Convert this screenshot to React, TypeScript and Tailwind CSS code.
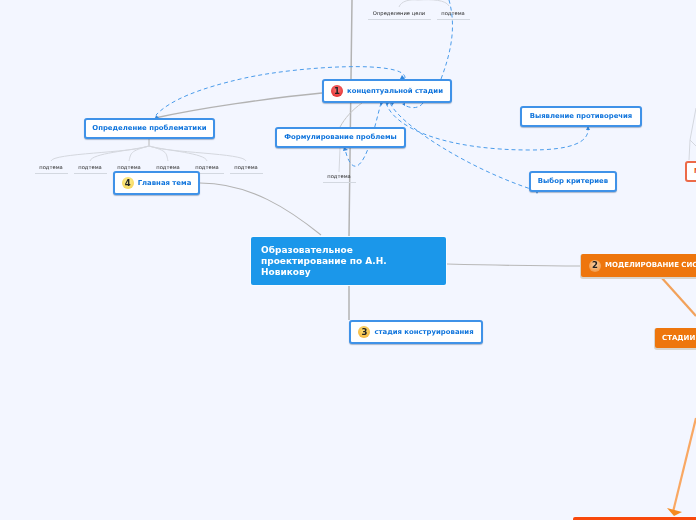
const dejavu = "font-['DejaVu_Sans',sans-serif]";

function Badge({ n, from, to, color = "text-[#222]" }: { n: string; from: string; to: string; color?: string }) {
  return (
    <span
      className={`w-[12px] h-[12px] shrink-0 rounded-full flex items-center justify-center text-[8.5px] font-bold ${color}`}
      style={{ background: `radial-gradient(circle at 50% 40%, ${from}, ${to})` }}
    >
      {n}
    </span>
  );
}

function Node({ x, y, w, h, children }: { x: number; y: number; w: number; h: number; children: React.ReactNode }) {
  return (
    <div
      className="absolute flex items-center justify-center gap-[4px] bg-white border-2 border-[#3f92e8] rounded-[3px] shadow-[0_1px_1px_rgba(60,90,130,0.4)] text-[#0f74dc] text-[6.9px] font-bold whitespace-nowrap"
      style={{ left: x, top: y, width: w, height: h }}
    >
      {children}
    </div>
  );
}

function Sub({ cx, y, w = 33, text = "подтема" }: { cx: number; y: number; w?: number; text?: string }) {
  return (
    <div
      className="absolute h-[13px] border-b border-[#d3d8e0] text-[#222] text-[5.2px] leading-[12px] text-center whitespace-nowrap"
      style={{ left: cx - w / 2, top: y, width: w }}
    >
      {text}
    </div>
  );
}

function Orange({ x, y, w, h, children }: { x: number; y: number; w: number; h: number; children: React.ReactNode }) {
  return (
    <div
      className="absolute flex items-center bg-[#ee760d] rounded-[2px] shadow-[0_1px_0_1px_#d8d4cc] text-white text-[7px] font-bold whitespace-nowrap overflow-hidden"
      style={{ left: x, top: y, width: w, height: h }}
    >
      {children}
    </div>
  );
}

const subs = [51, 90, 129, 168, 207, 246];

export default function App() {
  return (
    <div className="w-[696px] h-[520px] overflow-hidden bg-[#f3f6ff]">
      <div className={`relative w-[696px] h-[520px] blur-[0.25px] ${dejavu}`}>
        <svg className="absolute inset-0" width={696} height={520} viewBox="0 0 696 520" fill="none">
          {/* grey main branches */}
          <path d="M352 0 C351 60 350 150 349 237" stroke="#b3b3b3" strokeWidth={1.5} />
          <path d="M349 285 L349 320" stroke="#b3b3b3" strokeWidth={1.5} />
          <path d="M322 93 C270 98 200 108 155 118" stroke="#b3b3b3" strokeWidth={1.3} />
          <path d="M200 183 C250 183 290 210 321 235" stroke="#b3b3b3" strokeWidth={1.1} />
          <path d="M447 264 C490 265 540 266 581 266" stroke="#b8b8b8" strokeWidth={1.2} />
          <path d="M362 103 C352 110 345 118 340 127" stroke="#c4c4c4" strokeWidth={1} />
          {/* sub-topic fans */}
          <path d="M149 139 L149 146" stroke="#b8b8b8" strokeWidth={1} />
          {subs.map((cx) => (
            <path
              key={cx}
              d={cx < 149 ? `M149 146 C130 ${cx < 60 ? 153 : 151} ${cx + 2} 153 ${cx} 161` : `M149 146 C168 ${cx > 240 ? 153 : 151} ${cx - 2} 153 ${cx} 161`}
              stroke="#d4d7de"
              strokeWidth={1}
            />
          ))}
          <path d="M340 148 L339 172" stroke="#d4d7de" strokeWidth={1} />
          <path d="M399 7 C401 1 410 -1 418 0 C432 -1 446 0 449 6" stroke="#d4d7de" strokeWidth={1} />
          <path d="M689 160 L690 140 L696 108" stroke="#d4d7de" strokeWidth={1} />
          <path d="M690 140 L696 146" stroke="#d4d7de" strokeWidth={1} />
          {/* dashed relations */}
          <g stroke="#4a9bea" strokeWidth={1} strokeDasharray="4 3">
            <path d="M405 78 C406 60 300 66 245 78 C200 88 170 100 156 115" />
            <path d="M441 79 C452 50 456 25 449 0" />
            <path d="M423 103 C418 110 408 108 403 104" />
            <path d="M381 103 C375 125 368 160 357 166 C351 168 347 158 345 149" />
            <path d="M386 103 C395 130 450 150 530 150 C570 150 590 143 588 127" />
            <path d="M390 103 C400 125 470 170 537 191" />
          </g>
          <g fill="#2f86de">
            <path d="M402 75 L405 79 L400 79 Z" />
            <path d="M156 115 L159 118 L155 119 Z" />
            <path d="M402 104 L405 103 L405 106 Z" />
            <path d="M380 103 L383 103 L381 106 Z M386 103 L389 103 L387 106 Z M391 103 L394 103 L392 106 Z" />
            <path d="M344 147 L348 150 L343 151 Z" />
            <path d="M588 126 L590 130 L586 130 Z" />
            <path d="M537 194 L539 190 L535 190 Z" />
          </g>
          {/* orange branches */}
          <path d="M661 277 L696 316" stroke="#f2a25b" strokeWidth={2.2} />
          <path d="M696 418 L673 512" stroke="#f9a863" strokeWidth={2.2} />
          <path d="M667 508 L682 512 L674 516 Z" fill="#f58a1f" />
        </svg>

        <Sub cx={399} y={7} w={63} text="Определение цели" />
        <Sub cx={453} y={7} />
        {subs.map((cx) => (
          <Sub key={cx} cx={cx} y={161} />
        ))}
        <Sub cx={339} y={170} />

        <Node x={322} y={79} w={130} h={24}>
          <Badge n="1" from="#f77" to="#d91f1f" />
          <span>концептуальной стадии</span>
        </Node>
        <Node x={84} y={118} w={131} h={21}>Определение проблематики</Node>
        <Node x={113} y={171} w={87} h={24}>
          <Badge n="4" from="#fff59a" to="#f3cb45" />
          <span>Главная тема</span>
        </Node>
        <Node x={275} y={127} w={131} h={21}>Формулирование проблемы</Node>
        <Node x={520} y={106} w={122} h={21}>Выявление противоречия</Node>
        <Node x={529} y={171} w={88} h={21}>Выбор критериев</Node>
        <Node x={349} y={320} w={134} h={24}>
          <Badge n="3" from="#ffe27a" to="#f1a92c" />
          <span>стадия конструирования</span>
        </Node>

        <div className="absolute left-[251px] top-[237px] w-[195px] h-[48px] flex items-center pl-[10px] pr-[30px] bg-[#1b97ea] rounded-[2px] text-white text-[9px] leading-[11px] font-bold shadow-[0_0_0_1px_#f8fbff]">
          Образовательное проектирование по А.Н. Новикову
        </div>

        <Orange x={581} y={254} w={130} h={23}>
          <span className="ml-[8px] mr-[4px]">
            <Badge n="2" from="#f7d2a8" to="#f0892a" />
          </span>
          <span>МОДЕЛИРОВАНИЕ СИСТЕМЫ</span>
        </Orange>
        <Orange x={655} y={328} w={60} h={20}>
          <span className="ml-[7px]">СТАДИИ</span>
        </Orange>

        <div className="absolute left-[685px] top-[161px] w-[30px] h-[21px] pl-[7px] flex items-center bg-white border-2 border-[#ec6a48] rounded-[3px] text-[#e8502a] text-[6.9px] font-bold">
          М
        </div>
        <div className="absolute left-[573px] top-[517px] w-[140px] h-[10px] bg-[#f8490c] rounded-t-[2px] shadow-[0_0_0_1px_#f8f8ff]" />
      </div>
    </div>
  );
}
